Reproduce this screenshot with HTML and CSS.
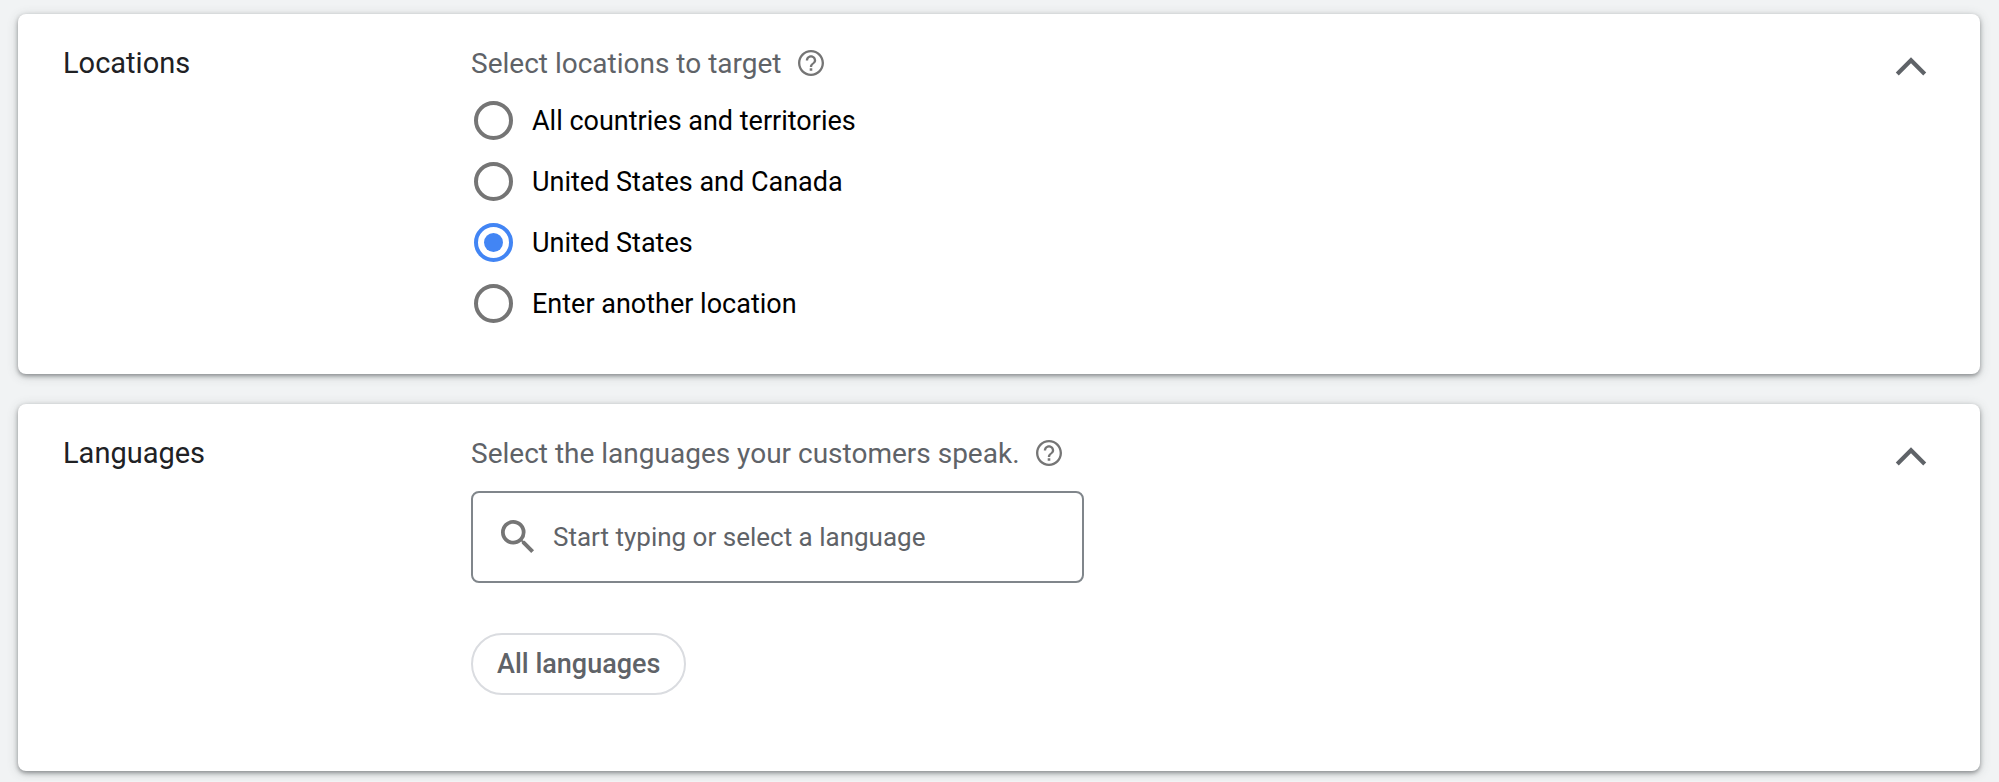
FILE: index.html
```
<!DOCTYPE html>
<html lang="en">
<head>
  <meta charset="UTF-8">
  <meta name="viewport" content="width=device-width, initial-scale=1.0">
  <title>Campaign settings</title>
  <link rel="stylesheet" href="styles.css">
</head>
<body>
  <main class="settings">
    <!-- Locations -->
    <section class="card">
      <h2 class="card-title">Locations</h2>
      <fieldset class="card-content">
        <legend class="prompt">
          Select locations to target
          <button type="button" class="icon-button" aria-label="Help about locations">
            <svg class="help-icon" viewBox="2 2 20 20"><path d="M11 18h2v-2h-2v2zm1-16C6.480 2 2 6.480 2 12s4.480 10 10 10 10-4.480 10-10S17.520 2 12 2zm0 18.200c-4.520 0-8.200-3.680-8.200-8.200S7.480 3.800 12 3.800s8.200 3.680 8.200 8.200-3.680 8.200-8.200 8.200zM12 6c-2.210 0-4 1.790-4 4h1.800c0-1.200 1-2.200 2.200-2.200s2.200 1 2.200 2.200c0 2-3.100 1.950-3.100 5h1.800c0-2.250 3.100-2.500 3.100-5 0-2.210-1.790-4-4-4z"/></svg>
          </button>
        </legend>
        <label class="option"><input type="radio" name="location">All countries and territories</label>
        <label class="option"><input type="radio" name="location">United States and Canada</label>
        <label class="option"><input type="radio" name="location" checked>United States</label>
        <label class="option"><input type="radio" name="location">Enter another location</label>
      </fieldset>
      <button type="button" class="icon-button collapse" aria-label="Collapse locations">
        <svg class="chevron" viewBox="0 0 30 18"><path d="M2 16 15 3l13 13"/></svg>
      </button>
    </section>

    <!-- Languages -->
    <section class="card">
      <h2 class="card-title">Languages</h2>
      <div class="card-content">
        <div class="prompt">
          <label for="language">Select the languages your customers speak.</label>
          <button type="button" class="icon-button" aria-label="Help about languages">
            <svg class="help-icon" viewBox="2 2 20 20"><path d="M11 18h2v-2h-2v2zm1-16C6.480 2 2 6.480 2 12s4.480 10 10 10 10-4.480 10-10S17.520 2 12 2zm0 18.200c-4.520 0-8.200-3.680-8.200-8.200S7.480 3.800 12 3.800s8.200 3.680 8.200 8.200-3.680 8.200-8.200 8.200zM12 6c-2.210 0-4 1.790-4 4h1.800c0-1.200 1-2.200 2.200-2.200s2.200 1 2.200 2.200c0 2-3.100 1.950-3.100 5h1.800c0-2.250 3.100-2.500 3.100-5 0-2.210-1.790-4-4-4z"/></svg>
          </button>
        </div>
        <div class="search">
          <svg class="search-icon" viewBox="3 3 18 18"><path d="M15.500 14h-.790l-.280-.270A6.471 6.471 0 0 0 16 9.500 6.500 6.500 0 1 0 9.500 16c1.610 0 3.090-.590 4.230-1.570l.270.280v.790l5 4.990L20.490 19l-4.990-5zm-6 0C7.010 14 5 11.990 5 9.500S7.010 5 9.500 5 14 7.010 14 9.500 11.990 14 9.500 14z"/></svg>
          <input type="text" id="language" placeholder="Start typing or select a language">
        </div>
        <button type="button" class="chip">All languages</button>
      </div>
      <button type="button" class="icon-button collapse" aria-label="Collapse languages">
        <svg class="chevron" viewBox="0 0 30 18"><path d="M2 16 15 3l13 13"/></svg>
      </button>
    </section>
  </main>
</body>
</html>
```
FILE: styles.css
```
/* Reset styles */
* {
  box-sizing: border-box;
  margin: 0;
  padding: 0;
}

/* Global styles */
body {
  font-family: Roboto, Arial, sans-serif;
  font-size: 27px;
  background-color: #f1f3f4;
}

button,
input {
  font: inherit;
}

.settings {
  display: flex;
  flex-direction: column;
  gap: 30px;
  padding: 14px 19px 10px 18px;
}

/* Card */
.card {
  display: flex;
  align-items: flex-start;
  padding: 31px 53px 40px 45px;
  background-color: #fff;
  border-radius: 8px;
  box-shadow: 0 2px 4px rgba(60, 64, 67, 0.5), 0 2px 12px rgba(60, 64, 67, 0.2);
}

.card-title {
  flex: 0 0 408px;
  font-size: 29px;
  font-weight: 400;
  line-height: 36px;
  color: #202124;
}

.card-content {
  flex: 1;
  min-width: 0;
  border: none;
}

.prompt {
  display: flex;
  align-items: center;
  gap: 16px;
  height: 36px;
  margin-bottom: 9px;
  font-size: 28px;
  color: #5f6368;
}

/* Icons */
.icon-button {
  display: flex;
  background: none;
  border: none;
  cursor: pointer;
}

.help-icon {
  width: 26px;
  height: 26px;
  fill: #757575;
}

.collapse {
  margin-top: 12px;
}

.chevron {
  width: 32px;
  height: 19px;
  fill: none;
  stroke: #5f6368;
  stroke-width: 4;
}

/* Radio options */
.option {
  display: flex;
  align-items: center;
  gap: 19px;
  width: fit-content;
  height: 61px;
  padding-left: 3px;
  color: #000;
  cursor: pointer;
}

.option input {
  display: grid;
  place-items: center;
  appearance: none;
  width: 39px;
  height: 39px;
  border: 4px solid #757575;
  border-radius: 50%;
}

.option input:checked {
  border-color: #4285f4;
}

.option input:checked::before {
  content: "";
  width: 19px;
  height: 19px;
  border-radius: 50%;
  background-color: #4285f4;
}

/* Language search */
.search {
  display: flex;
  align-items: center;
  gap: 18px;
  max-width: 613px;
  height: 92px;
  margin-top: 20px;
  padding: 0 28px;
  border: 2px solid #80868b;
  border-radius: 8px;
}

.search-icon {
  flex: none;
  width: 34px;
  height: 34px;
  fill: #757575;
}

.search input {
  flex: 1;
  min-width: 0;
  border: none;
  outline: none;
  font-size: 26px;
  color: #202124;
}

.search input::placeholder {
  color: #5f6368;
  opacity: 1;
}

.chip {
  height: 62px;
  margin: 50px 0 36px;
  padding: 0 24px;
  background-color: #fff;
  border: 2px solid #dadce0;
  border-radius: 31px;
  font-size: 27px;
  font-weight: 500;
  color: #5f6368;
  cursor: pointer;
}
```
